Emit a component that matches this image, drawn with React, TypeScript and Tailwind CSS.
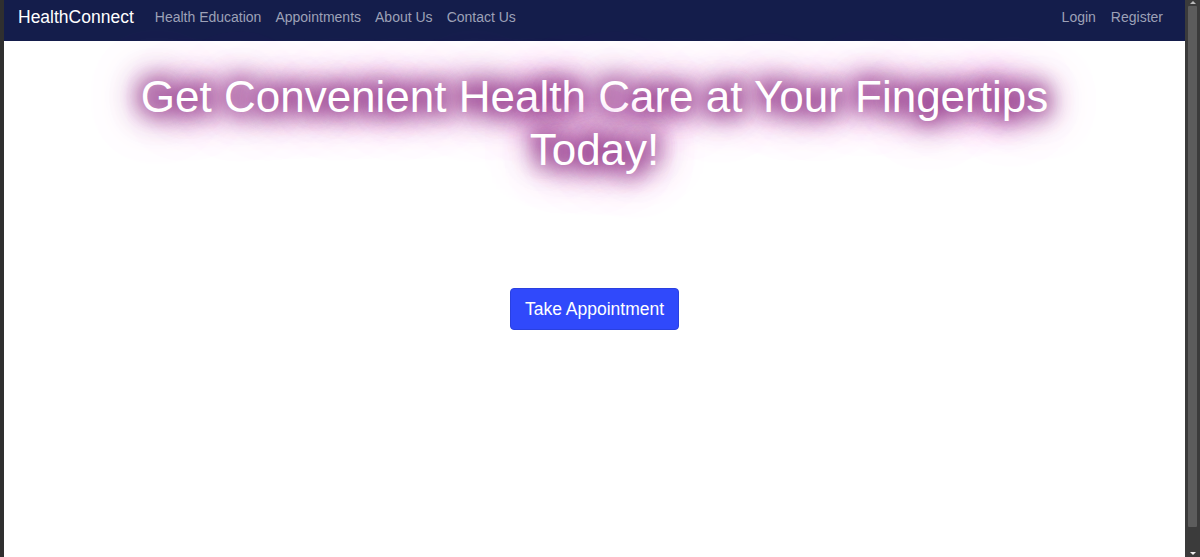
import React from "react";

const LINKS = ["Health Education", "Appointments", "About Us", "Contact Us"];

function Navbar() {
  return (
    <nav className="flex h-[41px] items-center justify-between bg-[#141d4b] pb-[6px] pl-[14px] pr-[22px]">
      <div className="flex items-center">
        <a href="#" className="mr-[21px] text-[17.5px] text-white">
          HealthConnect
        </a>
        <ul className="flex items-center gap-[14px] text-[14px] text-[#9da1b7]">
          {LINKS.map((l) => (
            <li key={l}>
              <a href="#">{l}</a>
            </li>
          ))}
        </ul>
      </div>
      <ul className="flex items-center gap-[15px] text-[14px] text-[#9da1b7]">
        <li>
          <a href="#">Login</a>
        </li>
        <li>
          <a href="#">Register</a>
        </li>
      </ul>
    </nav>
  );
}

function Scrollbar() {
  return (
    <div className="flex w-[15px] shrink-0 flex-col items-center bg-[#3b3b3b] px-[3px]">
      <div className="mt-[1px] h-0 w-0 border-x-[3px] border-b-[3px] border-x-transparent border-b-[#bbb]" />
      <div className="mt-[2px] h-[521px] w-[9px] rounded-[1px] bg-[#5c5c5c]" />
      <div className="flex-1" />
      <div className="mb-[2px] h-0 w-0 border-x-[3px] border-t-[3px] border-x-transparent border-t-[#eee]" />
    </div>
  );
}

export default function App() {
  return (
    <div className="flex h-[557px] w-[1200px] overflow-hidden bg-[#2f2f2f] font-['Liberation_Sans',Arial,sans-serif]">
      <div className="ml-[4px] flex flex-1 flex-col bg-white">
        <Navbar />
        <main className="flex flex-col items-center">
          <h1 className="mt-[29px] max-w-[960px] text-center text-[44px] leading-[53px] text-white [text-shadow:0_0_18px_#8c2c82,0_0_22px_#8c2c82,0_0_30px_#9a3a90,0_0_36px_#9a3a90,0_0_48px_#b468aa,0_0_64px_#d8a8d0]">
            Get Convenient Health Care at Your Fingertips Today!
          </h1>
          <button className="mt-[112px] h-[42px] rounded-[4px] border border-[#2a40e0] bg-[#3049fb] px-[14px] text-[17.5px] text-white">
            Take Appointment
          </button>
        </main>
      </div>
      <Scrollbar />
    </div>
  );
}
